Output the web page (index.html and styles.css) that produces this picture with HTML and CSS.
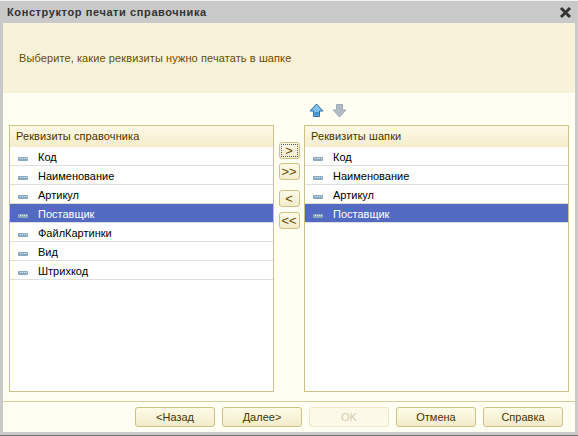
FILE: index.html
```html
<!DOCTYPE html>
<html>
  <head>
    <title>Конструктор печати справочника</title>
    <link rel="stylesheet" href="styles.css">
  </head>
  <body>
    <svg class="defs" width="0" height="0">
      <symbol id="attr" viewBox="0 0 10 4">
        <rect x="0" y="0" width="10" height="4" rx="1" fill="#8aa8bf"/>
        <path d="M2 1.5h1M4 1.5h1M6 1.5h1M8 1.5h1" stroke="#dfe9ef"/>
      </symbol>
    </svg>
    <div class="window">
      <div class="title-bar">
        <span class="title">Конструктор печати справочника</span>
        <svg class="close" width="13" height="13" viewBox="0 0 13 13">
          <path d="M2 2l9 9M11 2l-9 9" stroke="#333" stroke-width="3"/>
        </svg>
      </div>
      <div class="content">
        <div class="hint">Выберите, какие реквизиты нужно печатать в шапке</div>
        <div class="arrows">
          <svg width="15" height="15" viewBox="0 0 15 15">
            <path d="M7.5 1L14 8H10.5V13.5H4.5V8H1Z" fill="#7cc0ee" stroke="#2f6f9f"/>
            <rect x="5.5" y="9" width="4" height="3.5" fill="#3f8fc8"/>
          </svg>
          <svg width="15" height="15" viewBox="0 0 15 15">
            <path d="M7.5 14L14 7H10.5V1.5H4.5V7H1Z" fill="#afbac4" stroke="#a0abb5"/>
          </svg>
        </div>
        <div class="lists">
          <div class="panel">
            <div class="panel-head">Реквизиты справочника</div>
            <div class="row"><svg class="attr"><use href="#attr"/></svg>Код</div>
            <div class="row"><svg class="attr"><use href="#attr"/></svg>Наименование</div>
            <div class="row"><svg class="attr"><use href="#attr"/></svg>Артикул</div>
            <div class="row selected"><svg class="attr"><use href="#attr"/></svg>Поставщик</div>
            <div class="row"><svg class="attr"><use href="#attr"/></svg>ФайлКартинки</div>
            <div class="row"><svg class="attr"><use href="#attr"/></svg>Вид</div>
            <div class="row"><svg class="attr"><use href="#attr"/></svg>Штрихкод</div>
          </div>
          <div class="movers">
            <button class="mover focused"><span>&gt;</span></button>
            <button class="mover">&gt;&gt;</button>
            <button class="mover mover-back">&lt;</button>
            <button class="mover">&lt;&lt;</button>
          </div>
          <div class="panel">
            <div class="panel-head">Реквизиты шапки</div>
            <div class="row"><svg class="attr"><use href="#attr"/></svg>Код</div>
            <div class="row"><svg class="attr"><use href="#attr"/></svg>Наименование</div>
            <div class="row"><svg class="attr"><use href="#attr"/></svg>Артикул</div>
            <div class="row selected"><svg class="attr"><use href="#attr"/></svg>Поставщик</div>
          </div>
        </div>
        <div class="footer">
          <button class="btn">&lt;Назад</button>
          <button class="btn">Далее&gt;</button>
          <button class="btn disabled">OK</button>
          <button class="btn">Отмена</button>
          <button class="btn">Справка</button>
        </div>
      </div>
    </div>
  </body>
</html>
```

FILE: styles.css
```css
body{
  margin: 0;
  font-family: "Liberation Sans", Arial, sans-serif;
  font-size: 11px;
  color: #000;
}

.defs{
  display: none;
}

.window{
  width: 578px;
  height: 436px;
  box-sizing: border-box;
  display: flex;
  flex-direction: column;
  background-color: #c9c9c9;
  border-top: 1px solid #f2f2f2;
  padding: 0 3px 3px 3px;
  border-bottom: 1px solid #777;
}

.title-bar{
  height: 22px;
  flex: none;
  display: flex;
  align-items: center;
  justify-content: space-between;
  padding: 0 3px 0 4px;
}

.title{
  font-weight: bold;
  font-size: 11px;
  color: #333;
  letter-spacing: 0.6px;
}

.close{
  display: block;
}

.content{
  flex: 1;
  display: flex;
  flex-direction: column;
  background-color: #fffef2;
}

.hint{
  height: 70px;
  flex: none;
  display: flex;
  align-items: center;
  padding-left: 16px;
  background-color: #f8f3d8;
  color: #6a4a00;
  letter-spacing: 0.1px;
}

.arrows{
  height: 32px;
  flex: none;
  display: flex;
  align-items: center;
  gap: 8px;
  padding: 2px 0 0 306px;
  box-sizing: border-box;
}

.arrows svg{
  display: block;
}

.lists{
  display: flex;
  height: 267px;
  flex: none;
  padding: 0 6px;
}

.panel{
  flex: 1;
  border: 1px solid #cfc089;
  background-color: #fff;
}

.panel-head{
  height: 21px;
  line-height: 20px;
  padding-left: 6px;
  color: #4a3500;
  letter-spacing: 0.1px;
  background: linear-gradient(#fdf9e6, #f4edcb);
}

.row{
  height: 19px;
  box-sizing: border-box;
  padding-top: 2px;
  border-bottom: 1px solid #dedede;
  display: flex;
  align-items: center;
}

.row.selected{
  background-color: #536ac2;
  color: #fff;
}

.attr{
  width: 10px;
  height: 4px;
  margin: 4px 10px 0 8px;
  flex: none;
}

.movers{
  width: 30px;
  flex: none;
  display: flex;
  flex-direction: column;
  align-items: center;
  padding-top: 17px;
  box-sizing: border-box;
}

.mover{
  width: 21px;
  height: 17px;
  padding: 0;
  margin-bottom: 4px;
  border: 1px solid #d0c184;
  border-radius: 3px;
  background: linear-gradient(#fdfae8, #f3eccb);
  font-family: "Liberation Sans", Arial, sans-serif;
  font-size: 13px;
  line-height: 13px;
  color: #6a4a00;
}

.mover-back{
  margin-top: 6px;
  margin-bottom: 5px;
}

.mover.focused span{
  display: block;
  margin: 1px;
  height: 13px;
  border: 1px dotted #555;
  box-sizing: border-box;
  line-height: 11px;
}

.footer{
  flex: 1;
  display: flex;
  justify-content: flex-end;
  gap: 7px;
  margin-top: 9px;
  padding: 5px 12px 0 0;
  border-top: 1px solid #d8cd9c;
}

.btn{
  width: 80px;
  height: 20px;
  padding: 0;
  border: 1px solid #d0c184;
  border-radius: 3px;
  background: linear-gradient(#fdfae8, #f3eccb);
  font-family: "Liberation Sans", Arial, sans-serif;
  font-size: 11px;
  color: #4a3500;
}

.btn.disabled{
  border-color: #eee8c8;
  background: #fcf9e8;
  color: #d4cbac;
}
```
